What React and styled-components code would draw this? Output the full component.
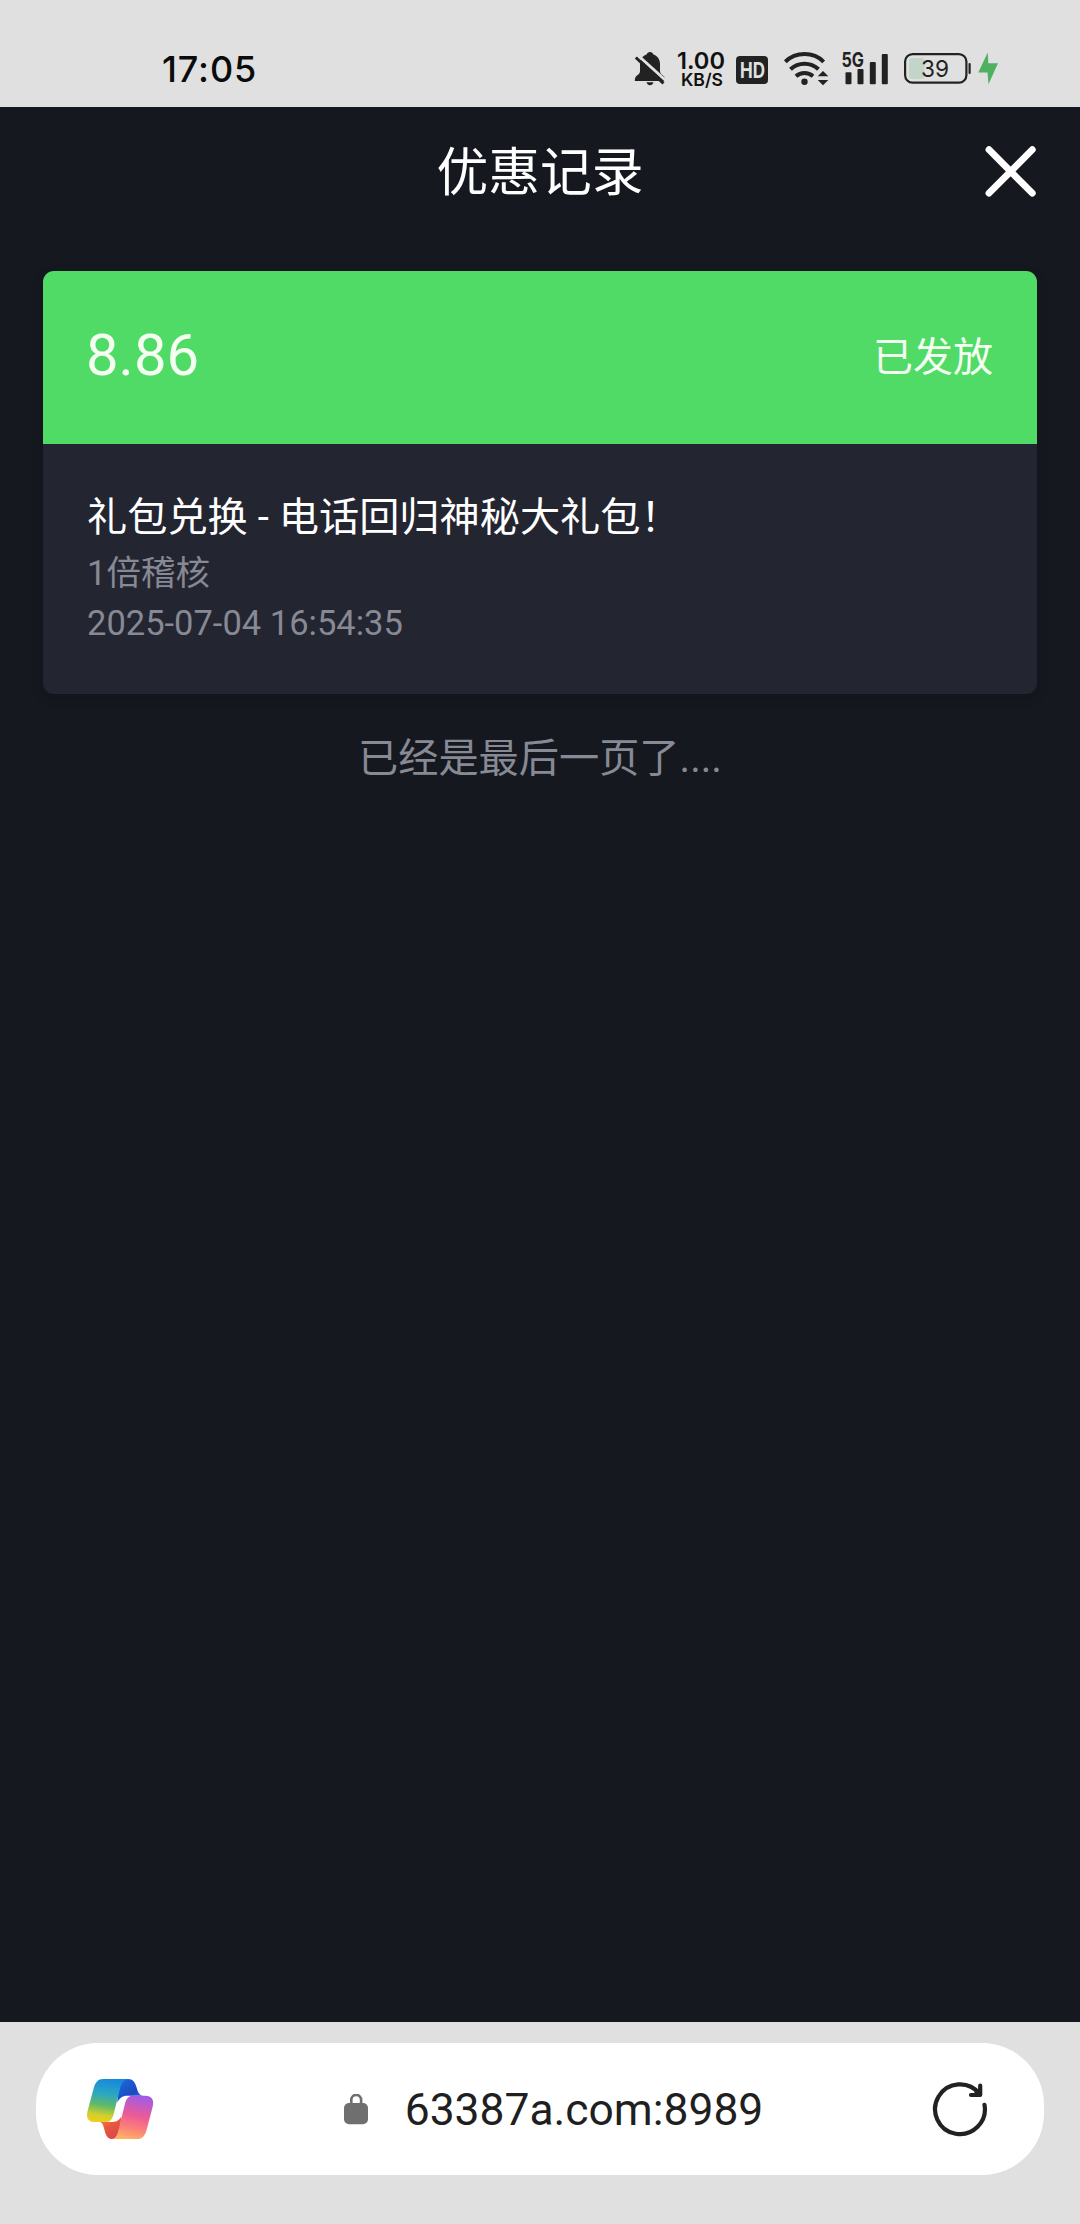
import React from 'react';
import styled, { createGlobalStyle } from 'styled-components';

const GlobalStyle = createGlobalStyle`
  * {
    box-sizing: border-box;
  }

  body {
    margin: 0;
    background-color: #15181f;
    font-family: Roboto, 'Noto Sans CJK SC', sans-serif;
  }
`;

const Screen = styled.div`
  display: flex;
  flex-direction: column;
  width: 1080px;
  height: 2224px;
  overflow: hidden;
  background-color: #15181f;
`;

const StatusBar = styled.div`
  display: flex;
  justify-content: space-between;
  flex: none;
  height: 107px;
  padding: 48px 80px 0 162px;
  background-color: #e0e0e0;
`;

const Clock = styled.div`
  font-family: Inter, sans-serif;
  font-size: 36px;
  font-weight: 500;
  line-height: 42px;
  letter-spacing: 0.9px;
  color: #0b0b0b;
`;

const StatusIcons = styled.div`
  display: flex;
`;

const StatusIcon = styled.svg`
  display: block;
  flex: none;
  width: ${(props) => props.$width}px;
  height: 40px;
  margin-left: ${(props) => props.$gap || 0}px;
  overflow: visible;
  font-family: Inter, sans-serif;
`;

const Header = styled.header`
  display: grid;
  grid-template-columns: 1fr auto 1fr;
  align-items: center;
  flex: none;
  height: 128px;
  padding: 0 44px;
`;

const Title = styled.h1`
  grid-column: 2;
  margin: 0;
  padding-top: 5px;
  font-size: 51.8px;
  font-weight: 400;
  line-height: 64px;
  color: #fff;
`;

const CloseButton = styled.button`
  justify-self: end;
  width: 52px;
  height: 52px;
  padding: 0;
  border: none;
  background: none;

  svg {
    display: block;
  }
`;

const Main = styled.main`
  flex: 1;
  padding: 36px 43px 0;
`;

const Card = styled.section`
  height: 423px;
  border-radius: 11px;
  overflow: hidden;
  background-color: #232531;
  box-shadow: 0 4px 12px rgba(0, 0, 0, 0.15);
`;

const CardTop = styled.div`
  display: flex;
  align-items: center;
  justify-content: space-between;
  height: 173px;
  padding: 0 44px 0 43px;
  background-color: #50da66;
  color: #f4fff2;
`;

const Amount = styled.div`
  padding-bottom: 6px;
  font-size: 58px;
  line-height: 68px;
`;

const State = styled.div`
  font-size: 40px;
  line-height: 56px;
`;

const CardBody = styled.div`
  padding: 44px 44px;
`;

const RecordName = styled.div`
  font-size: 40.2px;
  line-height: 60px;
  color: #fff;
`;

const RecordInfo = styled.div`
  font-size: 34.5px;
  line-height: 50px;
  color: #878994;
`;

const EndNote = styled.p`
  margin: 35px 0 0;
  font-size: 40.2px;
  line-height: 60px;
  text-align: center;
  color: #878994;
`;

const BrowserBar = styled.footer`
  flex: none;
  height: 202px;
  padding: 21px 36px 0;
  background-color: #e0e0e0;
`;

const AddressPill = styled.div`
  display: flex;
  align-items: center;
  height: 132px;
  padding: 0 54px 0 48px;
  border-radius: 62px;
  background-color: #fff;
`;

const Address = styled.div`
  display: flex;
  align-items: center;
  justify-content: center;
  flex: 1;
  gap: 37px;
  padding: 1px 0 0 21px;
  font-size: 44.4px;
  line-height: 56px;
  color: #1f1f1f;
`;

function BellOff() {
  return (
    <StatusIcon $width={34} viewBox="633 48 34 40">
      <path
        fill="#222"
        d="M650 52c1.800 0 2.800 1 3.200 2.200 4 1.400 6.800 5 6.800 9.600v7.200c0 2 1 3 3 4.600 1.600 1.300 2.200 2.600 2.200 5.400H634.800c0-2.800.6-4.100 2.200-5.400 2-1.600 3-2.600 3-4.600v-7.200c0-4.600 2.800-8.200 6.800-9.600.4-1.200 1.400-2.200 3.200-2.200z"
      />
      <path fill="#222" d="M646.500 82.300h7c-.6 2-1.800 3-3.500 3s-2.900-1-3.500-3z" />
      <path stroke="#e0e0e0" strokeWidth="3" d="M637 54.500l31 28" />
      <path stroke="#222" strokeWidth="3" d="M635.800 57.500L663.500 83.300" />
    </StatusIcon>
  );
}

function NetSpeed() {
  return (
    <StatusIcon $width={50} $gap={9} viewBox="676 48 50 40" fill="#111">
      <text x="677" y="68.800" fontSize="23.500" fontWeight="600" textLength="48" lengthAdjust="spacingAndGlyphs">1.00</text>
      <text x="681" y="86" fontSize="17.500" fontWeight="600" textLength="42" lengthAdjust="spacingAndGlyphs">KB/S</text>
    </StatusIcon>
  );
}

function HdBadge() {
  return (
    <StatusIcon $width={34} $gap={9} viewBox="735 48 34 40">
      <rect x="736" y="56" width="32" height="28" rx="4" fill="#222" />
      <text x="740" y="77.600" fontSize="21.500" fontWeight="700" fill="#e0e0e0" textLength="25" lengthAdjust="spacingAndGlyphs">HD</text>
    </StatusIcon>
  );
}

function Wifi() {
  return (
    <StatusIcon $width={48} $gap={14} viewBox="783 48 48 40">
      <g fill="none" stroke="#222" strokeWidth="4">
        <path d="M785.300 61.800c10.500-10.300 28-10.300 38.400 0" />
        <path d="M790.500 69.300c7.800-7.500 20.200-7.500 28 0" />
        <path d="M796 76.300c4.800-4.300 12.200-4.300 17 0" />
      </g>
      <circle cx="804.500" cy="81.700" r="3.200" fill="#222" />
      <path fill="#222" d="M823 71l5.300 5.300h-10.600zM823 85.300l5.300-5.300h-10.600z" />
    </StatusIcon>
  );
}

function Signal() {
  return (
    <StatusIcon $width={50} $gap={9} viewBox="840 48 50 40" fill="#222">
      <rect x="845.500" y="72.300" width="6" height="12" rx="1" />
      <rect x="857.500" y="69" width="6" height="15.300" rx="1" />
      <rect x="869.800" y="62" width="6" height="22.300" rx="1" />
      <rect x="881.800" y="54" width="6" height="30.300" rx="1" />
      <text x="841.500" y="67" fontSize="20.500" fontWeight="700" textLength="22.500" lengthAdjust="spacingAndGlyphs">5G</text>
    </StatusIcon>
  );
}

function Battery({ level }) {
  return (
    <StatusIcon $width={70} $gap={12} viewBox="902 48 70 40">
      <rect x="909" y="58" width={level * 0.4} height="21" rx="3" fill="#c3d5c7" />
      <rect x="905.100" y="54.100" width="61.300" height="28.600" rx="7.500" fill="none" stroke="#222" strokeWidth="2.200" />
      <rect x="968.500" y="63" width="2.200" height="11" rx="1" fill="#222" />
      <text x="921" y="76.900" fontSize="23.500" fill="#222" textLength="28" lengthAdjust="spacingAndGlyphs">{level}</text>
    </StatusIcon>
  );
}

function Bolt() {
  return (
    <StatusIcon $width={24} $gap={4} viewBox="976 48 24 40">
      <path fill="#50b061" d="M987.700 52.500L978.300 72.500H987.500L988.500 84.300L998 63.300H988.300z" />
    </StatusIcon>
  );
}

function CopilotLogo() {
  return (
    <svg width="72" height="66" viewBox="72 78 216 198">
      <defs>
        <linearGradient id="ribbonLeft" x1="0.55" y1="0" x2="0.4" y2="1">
          <stop offset="0" stopColor="#1688dc" />
          <stop offset="0.35" stopColor="#2ba7c4" />
          <stop offset="0.62" stopColor="#5fb968" />
          <stop offset="0.85" stopColor="#cfd02c" />
          <stop offset="1" stopColor="#f0cd1e" />
        </linearGradient>
        <linearGradient id="ribbonRight" x1="0.6" y1="0" x2="0.4" y2="1">
          <stop offset="0" stopColor="#a25be6" />
          <stop offset="0.45" stopColor="#ec5a96" />
          <stop offset="0.75" stopColor="#fb8178" />
          <stop offset="1" stopColor="#ffb266" />
        </linearGradient>
        <linearGradient id="foldTop" x1="0" y1="0" x2="1" y2="1">
          <stop offset="0" stopColor="#1b6fdc" />
          <stop offset="0.6" stopColor="#1a49c4" />
          <stop offset="1" stopColor="#2b7be8" />
        </linearGradient>
        <linearGradient id="foldBottom" x1="0" y1="0" x2="0.6" y2="1">
          <stop offset="0" stopColor="#f5903c" />
          <stop offset="0.5" stopColor="#e9583c" />
          <stop offset="1" stopColor="#d9474f" />
        </linearGradient>
      </defs>
      <path fill="url(#foldTop)" d="M190 87H204C219 87 225 97 230 113C234 127 238 135 250 137H202C187 137 178 144 172 158L174 115z" />
      <path fill="url(#foldBottom)" d="M120 216H158C170 216 178 211 184 199L180 240L166 267H158C143 267 138 256 134 242C130 226 128 219 120 216z" />
      <path fill="url(#ribbonLeft)" d="M130 87H206C192 88 186 97 181 112L160 196C156 208 151 216 141 216H105C84 216 77 203 83 182L101 115C106 97 114 87 130 87z" />
      <path fill="url(#ribbonRight)" d="M218 137H255C276 137 283 150 278 170L260 239C255 257 247 267 231 267H156C166 265 171 257 175 242L196 157C200 145 207 137 218 137z" />
    </svg>
  );
}

function Lock() {
  return (
    <svg width="24" height="31" viewBox="0 0 24 31">
      <rect y="9" width="24" height="21.300" rx="5" fill="#6f6f6f" />
      <path fill="none" stroke="#6f6f6f" strokeWidth="2.600" d="M7.300 11V5.800a4.900 4.900 0 0 1 9.800 0V11" />
    </svg>
  );
}

function Reload() {
  return (
    <svg width="60" height="60" viewBox="-30 -30 60 60" fill="none" stroke="#222" strokeWidth="4.200" strokeLinecap="round" strokeLinejoin="round">
      <path d="M24.500 -4.200A24.900 24.900 0 1 1 19.400 -15.400" />
      <path d="M20.200 -23.300V-14H11" />
      <path fill="#222" stroke="none" d="M12 -14L20 -22V-14z" />
    </svg>
  );
}

export default function App() {
  return (
    <>
      <GlobalStyle />
      <Screen>
        <StatusBar>
          <Clock>17:05</Clock>
          <StatusIcons>
            <BellOff />
            <NetSpeed />
            <HdBadge />
            <Wifi />
            <Signal />
            <Battery level={39} />
            <Bolt />
          </StatusIcons>
        </StatusBar>

        <Header>
          <Title>优惠记录</Title>
          <CloseButton aria-label="关闭">
            <svg width="52" height="52" viewBox="0 0 52 52" stroke="#fff" strokeWidth="6.800" strokeLinecap="round">
              <path d="M5 4.700L48.300 48.200M48.300 4.700L5 48.200" />
            </svg>
          </CloseButton>
        </Header>

        <Main>
          <Card>
            <CardTop>
              <Amount>8.86</Amount>
              <State>已发放</State>
            </CardTop>
            <CardBody>
              <RecordName>礼包兑换 - 电话回归神秘大礼包！</RecordName>
              <RecordInfo>1倍稽核</RecordInfo>
              <RecordInfo>2025-07-04 16:54:35</RecordInfo>
            </CardBody>
          </Card>
          <EndNote>已经是最后一页了....</EndNote>
        </Main>

        <BrowserBar>
          <AddressPill>
            <CopilotLogo />
            <Address>
              <Lock />
              63387a.com:8989
            </Address>
            <Reload />
          </AddressPill>
        </BrowserBar>
      </Screen>
    </>
  );
}
